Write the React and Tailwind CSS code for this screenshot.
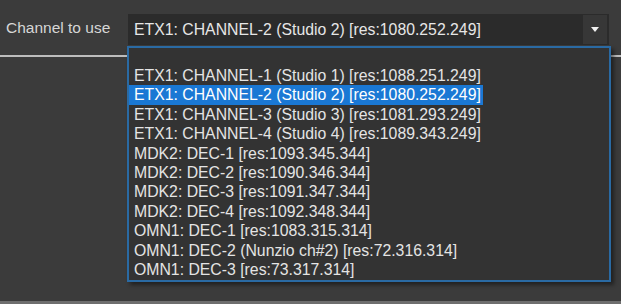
import React from "react";

const items = [
  "ETX1: CHANNEL-1 (Studio 1) [res:1088.251.249]",
  "ETX1: CHANNEL-2 (Studio 2) [res:1080.252.249]",
  "ETX1: CHANNEL-3 (Studio 3) [res:1081.293.249]",
  "ETX1: CHANNEL-4 (Studio 4) [res:1089.343.249]",
  "MDK2: DEC-1 [res:1093.345.344]",
  "MDK2: DEC-2 [res:1090.346.344]",
  "MDK2: DEC-3 [res:1091.347.344]",
  "MDK2: DEC-4 [res:1092.348.344]",
  "OMN1: DEC-1 [res:1083.315.314]",
  "OMN1: DEC-2 (Nunzio ch#2) [res:72.316.314]",
  "OMN1: DEC-3 [res:73.317.314]",
];

export default function App() {
  return (
    <div className="relative w-[621px] h-[304px] overflow-hidden bg-[#3b3b3b] font-['Liberation_Sans',Arial,sans-serif] flex flex-col">
      <div className="flex items-center h-[31px] mt-[14px] pl-[6px]">
        <span className="w-[122px] text-[15.5px] text-[#d6d6d6] leading-none -mt-[3px]">Channel to use</span>
        <div className="flex items-stretch w-[481px] h-[31px] bg-[#2b2b2b] py-[1px] pr-[2px]">
          <span className="flex-1 pl-[6px] pt-[5px] text-[15.8px] leading-[19px] text-[#e6e6e6] whitespace-nowrap">
            ETX1: CHANNEL-2 (Studio 2) [res:1080.252.249]
          </span>
          <div className="w-[24px] bg-[#373737] flex items-center justify-center">
            <svg width="8" height="5" viewBox="0 0 8 5">
              <path d="M0 0 H8 L4 5 Z" fill="#f0f0f0" />
            </svg>
          </div>
        </div>
      </div>
      <div className="mt-[10px] h-[2px] bg-[#bdbdbd]" />
      <div className="flex-1" />
      <div className="h-[3px] bg-[#6e6e6e]" />

      <div className="absolute left-[127px] top-[46px] w-[484px] h-[236px] bg-[#333333] border-2 border-[#2a6aa3] shadow-[3px_3px_4px_rgba(0,0,0,0.45)]">
        <div className="pt-[18px]">
          {items.map((t, i) => (
            <div key={i} className="h-[19.4px] flex">
              <div
                className={
                  i === 1
                    ? "w-[354px] bg-[#1a78d4] text-white pl-[5px] text-[15.8px] leading-[19.4px] whitespace-nowrap"
                    : "pl-[5px] text-[15.8px] leading-[19.4px] text-[#e4e4e4] whitespace-nowrap"
                }
              >
                {t}
              </div>
            </div>
          ))}
        </div>
      </div>
    </div>
  );
}
